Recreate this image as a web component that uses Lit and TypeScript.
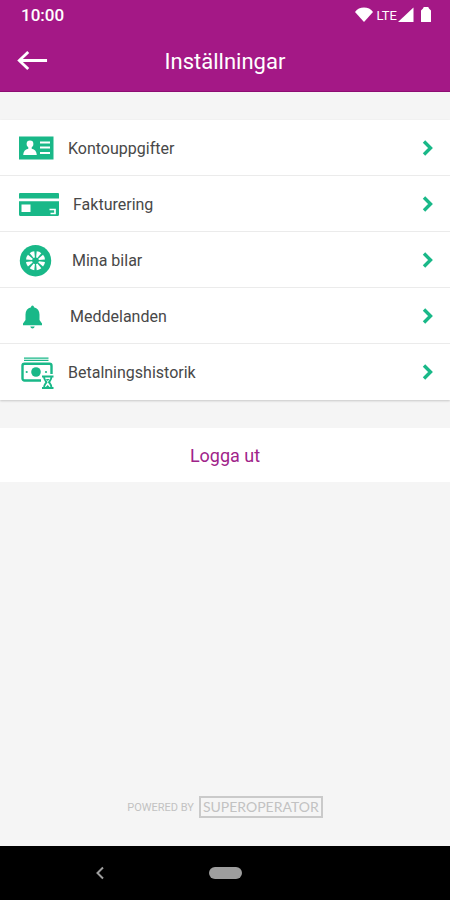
import { LitElement, html, css, svg, type SVGTemplateResult } from "lit";
import { customElement, property } from "lit/decorators.js";

interface MenuItem {
  label: string;
  width: number;
  art: SVGTemplateResult;
}

const spokes = [0, 45, 90, 135, 180, 225, 270, 315];

const items: MenuItem[] = [
  {
    label: "Kontouppgifter",
    width: 36,
    art: svg`
      <path fill="currentColor" d="M1 3.500h34.500v23H1z"/>
      <circle cx="12" cy="11" r="3.400" fill="#fff"/>
      <path fill="#fff" d="M10.300 13h3.400v2.700c3.300.8 4.900 2.700 5.100 6.300H5.200c.2-3.600 1.800-5.500 5.100-6.300z"/>
      <path stroke="#fff" stroke-width="1.800" d="M22 9.500h10M22 14.500h10M22 20h10"/>`,
  },
  {
    label: "Fakturering",
    width: 41,
    art: svg`
      <path fill="currentColor" d="M2 4h38a1 1 0 0 1 1 1v4.500H1V5a1 1 0 0 1 1-1zM1 12.200h40V25.500a1.500 1.500 0 0 1-1.500 1.500h-37A1.500 1.500 0 0 1 1 25.500z"/>
      <rect x="3.500" y="15.500" width="9" height="7.500" fill="#fff"/>
      <path fill="none" stroke="#fff" stroke-width="1.700" d="M31.500 20.500h5.500v4h-4.500"/>`,
  },
  {
    label: "Mina bilar",
    width: 40,
    art: svg`
      <circle cx="17.500" cy="15.700" r="15.700" fill="currentColor"/>
      ${spokes.map(
        (a) => svg`<path fill="#fff" transform="rotate(${a + 22.5} 17.500 15.700)" d="M15 6.500q2.500-.9 5 0L18.200 12.400h-1.400z"/>`
      )}
      <circle cx="17.500" cy="15.700" r="2.800" fill="currentColor"/>`,
  },
  {
    label: "Meddelanden",
    width: 38,
    art: svg`
      <path fill="currentColor" d="M14.500 4.500c.9 0 1.400.7 1.400 1.800 3.700.9 5.600 3.600 5.600 7.200V19l2.500 3.500v1.700H5v-1.700L7.500 19v-5.500c0-3.600 1.900-6.300 5.600-7.200 0-1.100.5-1.800 1.400-1.800zM12.300 25.500h4.400c-.3 1.300-1.100 2-2.200 2s-1.900-.7-2.200-2z"/>`,
  },
  {
    label: "Betalningshistorik",
    width: 36,
    art: svg`
      <path stroke="currentColor" stroke-width="1.300" d="M6 1.200h24.500M6 3.300h24.500"/>
      <path fill="none" stroke="currentColor" stroke-width="2.400" d="M23 23.500H6.500a2 2 0 0 1-2-2V8.700a2 2 0 0 1 2-2h25a2 2 0 0 1 2 2V17"/>
      <circle cx="18" cy="15" r="4.800" fill="currentColor"/>
      <circle cx="8.700" cy="15" r="1.100" fill="currentColor"/>
      <circle cx="28" cy="15" r="1.100" fill="currentColor"/>
      <path fill="none" stroke="currentColor" stroke-width="1.900" d="M24 19.500h11.500M24 31h11.500M26 19.500c0 3.300 1.800 4.400 2.500 5.700-.7 1.300-2.500 2.200-2.500 5.800M33.500 19.500c0 3.300-1.800 4.400-2.500 5.700.7 1.300 2.500 2.200 2.500 5.800"/>
      <path fill="currentColor" d="M27.700 22h4l-2 2zM29.700 28l2.300 2.500h-4.600z"/>`,
  },
];

@customElement("status-bar")
export class StatusBar extends LitElement {
  static styles = css`
    :host {
      display: flex;
      align-items: center;
      justify-content: space-between;
      height: 30px;
      padding: 0 18px 0 21px;
      color: #fff;
    }
    .time { font-size: 17px; font-weight: 500; }
    .signals { display: flex; align-items: center; }
    .network { font-size: 13px; margin: 0 1px 0 4px; }
    svg { display: block; }
    .battery { margin-left: 6px; }
  `;
  render() {
    return html`
      <span class="time">10:00</span>
      <div class="signals">
        <svg width="18" height="16" viewBox="0 0 18 16" aria-hidden="true"><path fill="#fff" d="M9 15L0 5C4-.9 14-.9 18 5z"/></svg>
        <span class="network">LTE</span>
        <svg width="16" height="16" viewBox="0 0 16 16" aria-hidden="true"><path fill="#fff" d="M15.500.5v14.500H0z"/></svg>
        <svg class="battery" width="12" height="16" viewBox="0 0 12 16" aria-hidden="true"><path fill="#fff" d="M4-.5h4L9 1.500l2 2V14.500a.5.5 0 0 1-.5.5h-9a.5.5 0 0 1-.5-.5V3.500l2-2z"/></svg>
      </div>
    `;
  }
}

@customElement("settings-row")
export class SettingsRow extends LitElement {
  @property({ attribute: false }) item!: MenuItem;

  static styles = css`
    :host { display: block; }
    .row {
      display: flex;
      align-items: center;
      gap: 14px;
      box-sizing: border-box;
      width: 100%;
      height: 56px;
      padding: 2px 16px 0 18px;
      border: 0;
      border-bottom: 1px solid var(--divider, #ebebeb);
      background: #fff;
      color: #484848;
      font: 400 16px/24px Roboto, sans-serif;
      text-align: left;
      cursor: pointer;
    }
    .icon, .chevron { display: block; flex: none; color: #19b888; }
    .label { flex: 1; }
  `;
  render() {
    const { label, width, art } = this.item;
    return html`
      <button class="row" type="button">
        <svg class="icon" width=${width} height="32" viewBox="0 0 ${width} 32" aria-hidden="true">${art}</svg>
        <span class="label">${label}</span>
        <svg class="chevron" width="12" height="18" viewBox="0 0 12 18" aria-hidden="true">
          <path fill="none" stroke="currentColor" stroke-width="3.400" d="M2 1.500L8.500 8 2 14.500"/>
        </svg>
      </button>
    `;
  }
}

@customElement("app-root")
export class AppRoot extends LitElement {
  static styles = css`
    :host {
      display: flex;
      flex-direction: column;
      min-height: 100vh;
      background: #f5f5f5;
      font-family: Roboto, sans-serif;
    }
    .top { background: #a41886; border-bottom: 1px solid #8d0c72; }
    .bar {
      display: grid;
      grid-template-columns: 64px 1fr 64px;
      align-items: center;
      height: 61px;
    }
    .back {
      display: flex;
      padding: 8px 16px;
      border: 0;
      background: none;
      cursor: pointer;
    }
    .title {
      margin: 0;
      padding-top: 2px;
      color: #fff;
      font-size: 22px;
      font-weight: 400;
      line-height: 32px;
      text-align: center;
    }
    .content {
      display: flex;
      flex: 1;
      flex-direction: column;
      gap: 28px;
      padding-top: 28px;
    }
    .list {
      margin: 0;
      padding: 0;
      list-style: none;
      box-shadow: 0 1px 2px #c8c8c8;
    }
    .list li:last-child { --divider: #fff; }
    .logout {
      height: 54px;
      padding: 2px 0 0;
      border: 0;
      background: #fff;
      color: #a0238a;
      font: 400 18px/24px Roboto, sans-serif;
      cursor: pointer;
    }
    .powered {
      display: flex;
      align-items: center;
      justify-content: center;
      gap: 5px;
      padding-bottom: 28px;
      color: #c2c2c2;
      font-size: 11px;
    }
    .brand {
      padding: 0 2px;
      border: 2px solid #cacaca;
      font-family: Lato, sans-serif;
      font-size: 14px;
      line-height: 18px;
    }
    .nav {
      display: grid;
      grid-template-columns: 1fr auto 1fr;
      align-items: center;
      height: 54px;
      background: #000;
    }
    .nav button {
      display: flex;
      padding: 0;
      border: 0;
      background: none;
      cursor: pointer;
    }
    .nav .navback { justify-self: center; padding-right: 8px; }
    .nav .home { width: 33px; height: 12px; border-radius: 6px; background: #9e9e9e; }
  `;
  render() {
    return html`
      <header class="top">
        <status-bar></status-bar>
        <div class="bar">
          <button class="back" type="button" aria-label="Tillbaka">
            <svg width="34" height="22" viewBox="0 0 34 22" aria-hidden="true">
              <path fill="none" stroke="#fff" stroke-width="3" d="M33 10.500H4M13 1.500L3.500 10.500l9.500 9"/>
            </svg>
          </button>
          <h1 class="title">Inställningar</h1>
        </div>
      </header>
      <main class="content">
        <ul class="list">
          ${items.map((item) => html`<li><settings-row .item=${item}></settings-row></li>`)}
        </ul>
        <button class="logout" type="button">Logga ut</button>
      </main>
      <footer class="powered">
        <span>POWERED BY</span>
        <span class="brand">SUPEROPERATOR</span>
      </footer>
      <nav class="nav">
        <button class="navback" type="button" aria-label="Bakåt">
          <svg width="10" height="14" viewBox="0 0 10 14" aria-hidden="true">
            <path fill="none" stroke="#9e9e9e" stroke-width="2" d="M8 1.500L2.500 7 8 12.500"/>
          </svg>
        </button>
        <button class="home" type="button" aria-label="Hem"></button>
      </nav>
    `;
  }
}
